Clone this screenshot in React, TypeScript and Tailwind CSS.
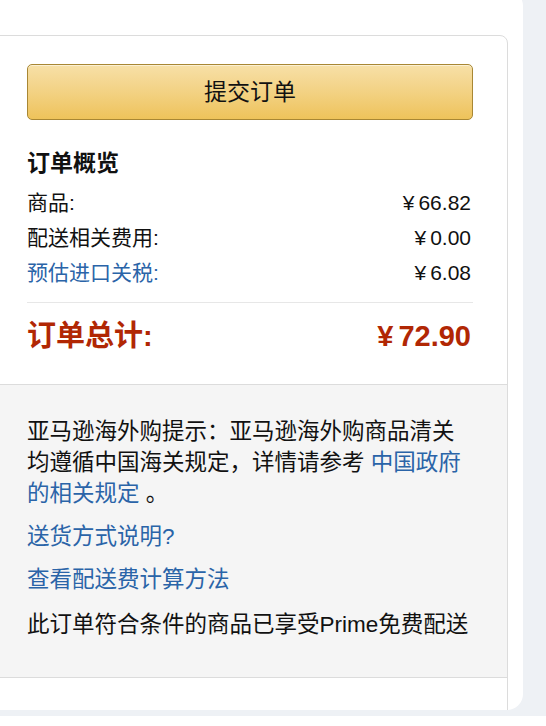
const font = {
  fontFamily: '"Liberation Sans", "Noto Sans CJK SC", sans-serif',
};

function Row({
  label,
  value,
  link = false,
}: {
  label: string;
  value: string;
  link?: boolean;
}) {
  return (
    <div className="flex h-[35px] items-center justify-between text-[21px]">
      <span className={link ? "text-[#2a64a8]" : "text-[#111]"}>{label}</span>
      <span className="pr-[2px] text-[#111]">
        ¥<span className="ml-[4px]">{value}</span>
      </span>
    </div>
  );
}

export default function App() {
  return (
    <div className="min-h-[726px] bg-[#eef1f5]" style={font}>
      <div className="-mt-[10px] h-[720px] w-[523px] overflow-hidden rounded-r-[16px] bg-white pr-[15px] pt-[45px]">
        <div className="-ml-[8px] h-[720px] rounded-tr-[8px] border border-[#dcdcdc]">
          {/* summary */}
          <div className="px-[34px] pb-[27px] pt-[28px]">
            <button className="flex h-[56px] w-full items-center justify-center rounded-[5px] border border-[#a88734] bg-gradient-to-b from-[#f7e0a7] to-[#eec35a] text-[23px] text-[#111] shadow-[inset_0_1px_0_rgba(255,255,255,0.5)]">
              提交订单
            </button>

            <h2 className="mt-[28px] text-[23px] font-bold leading-[30px] text-[#111]">
              订单概览
            </h2>
            <div className="mt-[7px]">
              <Row label="商品:" value="66.82" />
              <Row label="配送相关费用:" value="0.00" />
              <Row label="预估进口关税:" value="6.08" link />
            </div>

            <div className="mt-[12px] border-t border-[#e7e7e7]" />

            <div className="mt-[14px] flex h-[40px] items-center justify-between pr-[2px] text-[29px] font-bold text-[#b12704]">
              <span>订单总计:</span>
              <span>
                ¥<span className="ml-[5px]">72.90</span>
              </span>
            </div>
          </div>

          {/* notes */}
          <div className="border-y border-[#dcdcdc] bg-[#f5f5f5] px-[34px] pb-[37px] pt-[31px] text-[22.5px] leading-[31px] text-[#111]">
            <p>
              亚马逊海外购提示：亚马逊海外购商品清关均遵循中国海关规定，详情请参考{" "}
              <span className="text-[#2a64a8]">中国政府的相关规定</span> 。
            </p>
            <p className="mt-[12px] text-[#2a64a8]">送货方式说明?</p>
            <p className="mt-[12px] text-[#2a64a8]">查看配送费计算方法</p>
            <p className="mt-[14px]">此订单符合条件的商品已享受Prime免费配送</p>
          </div>
        </div>
      </div>
    </div>
  );
}
